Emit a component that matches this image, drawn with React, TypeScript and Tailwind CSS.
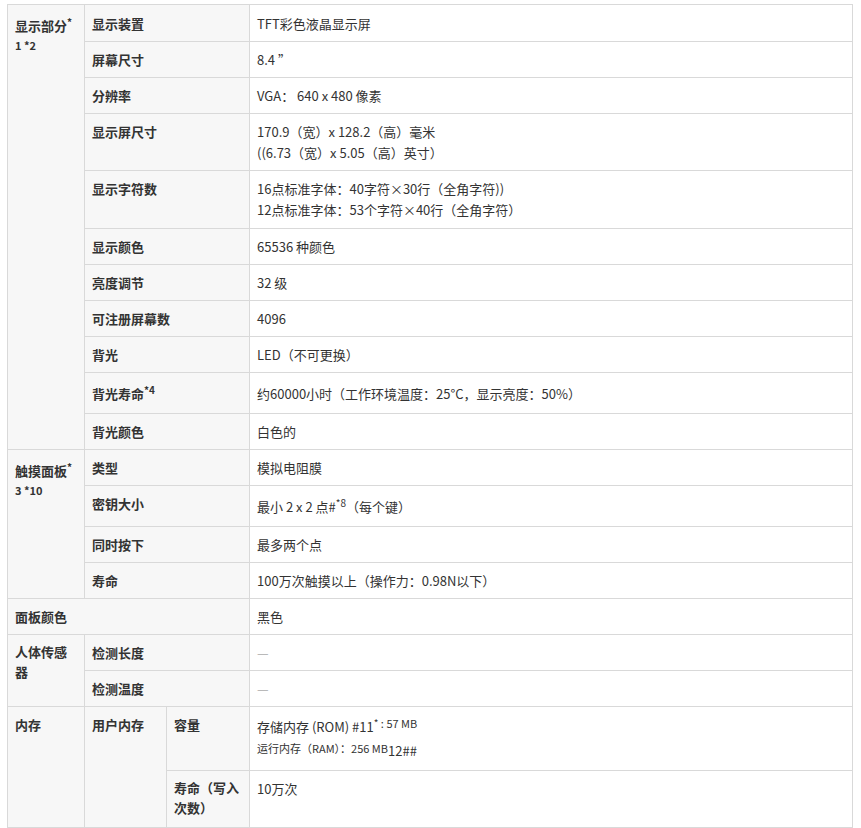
import React from "react";

const B = "border border-[#d9d9d9]";
const TH = `${B} bg-[#f7f7f7] px-[7px] py-[7px] text-left align-top font-bold`;
const TD = `${B} bg-white px-[7px] py-[7px] align-top font-normal`;

function Sup({ children, bold }: { children: React.ReactNode; bold?: boolean }) {
  return (
    <span className={`relative -top-[5px] text-[10px] leading-none ${bold ? "font-bold" : "font-normal"}`}>
      {children}
    </span>
  );
}

export default function App() {
  return (
    <div
      className="bg-white min-h-[828px] pl-[7px] pt-[4px] text-[#333] text-[13px] leading-[21px]"
      style={{ fontFamily: '"Noto Sans CJK SC", "Noto Sans", sans-serif' }}
    >
      <table className="table-fixed border-collapse w-[846px]">
        <colgroup>
          <col className="w-[77px]" />
          <col className="w-[82px]" />
          <col className="w-[83px]" />
          <col />
        </colgroup>
        <tbody>
          <tr>
            <th rowSpan={11} className={`${TH} !pt-[10px]`}>
              显示部分<Sup bold>*</Sup>
              <div className="text-[11px] leading-[19px]">1 *2</div>
            </th>
            <th colSpan={2} className={`${TH} !pt-[8px]`}>显示装置</th>
            <td className={`${TD} !pt-[8px]`}>TFT彩色液晶显示屏</td>
          </tr>
          <tr>
            <th colSpan={2} className={TH}>屏幕尺寸</th>
            <td className={TD}>8.4 ”</td>
          </tr>
          <tr>
            <th colSpan={2} className={TH}>分辨率</th>
            <td className={TD}>VGA： 640 x 480 像素</td>
          </tr>
          <tr>
            <th colSpan={2} className={TH}>显示屏尺寸</th>
            <td className={TD}>
              170.9（宽）x 128.2（高）毫米
              <br />
              ((6.73（宽）x 5.05（高）英寸）
            </td>
          </tr>
          <tr>
            <th colSpan={2} className={TH}>显示字符数</th>
            <td className={`${TD} !pb-[8px]`}>
              16点标准字体：40字符×30行（全角字符))
              <br />
              12点标准字体：53个字符×40行（全角字符）
            </td>
          </tr>
          <tr>
            <th colSpan={2} className={TH}>显示颜色</th>
            <td className={TD}>65536 种颜色</td>
          </tr>
          <tr>
            <th colSpan={2} className={TH}>亮度调节</th>
            <td className={TD}>32 级</td>
          </tr>
          <tr>
            <th colSpan={2} className={TH}>可注册屏幕数</th>
            <td className={TD}>4096</td>
          </tr>
          <tr>
            <th colSpan={2} className={TH}>背光</th>
            <td className={TD}>LED（不可更换）</td>
          </tr>
          <tr>
            <th colSpan={2} className={`${TH} !py-[9.5px]`}>
              背光寿命<Sup bold>*4</Sup>
            </th>
            <td className={`${TD} !py-[9.5px]`}>约60000小时（工作环境温度：25°C，显示亮度：50%）</td>
          </tr>
          <tr>
            <th colSpan={2} className={TH}>背光颜色</th>
            <td className={TD}>白色的</td>
          </tr>
          <tr>
            <th rowSpan={4} className={`${TH} !pt-[10px]`}>
              触摸面板<Sup bold>*</Sup>
              <div className="text-[11px] leading-[19px]">3 *10</div>
            </th>
            <th colSpan={2} className={TH}>类型</th>
            <td className={TD}>模拟电阻膜</td>
          </tr>
          <tr>
            <th colSpan={2} className={TH}>密钥大小</th>
            <td className={`${TD} !pt-[10px] !pb-[9px]`}>
              最小 2 x 2 点#<Sup>*8</Sup>（每个键）
            </td>
          </tr>
          <tr>
            <th colSpan={2} className={TH}>同时按下</th>
            <td className={TD}>最多两个点</td>
          </tr>
          <tr>
            <th colSpan={2} className={TH}>寿命</th>
            <td className={TD}>100万次触摸以上（操作力：0.98N以下）</td>
          </tr>
          <tr>
            <th colSpan={3} className={TH}>面板颜色</th>
            <td className={TD}>黑色</td>
          </tr>
          <tr>
            <th rowSpan={2} className={`${TH} leading-[20px]`}>人体传感器</th>
            <th colSpan={2} className={TH}>检测长度</th>
            <td className={`${TD} text-[#aaa]`}>—</td>
          </tr>
          <tr>
            <th colSpan={2} className={TH}>检测温度</th>
            <td className={`${TD} text-[#aaa]`}>—</td>
          </tr>
          <tr>
            <th rowSpan={2} className={TH}>内存</th>
            <th rowSpan={2} className={TH}>用户内存</th>
            <th className={TH}>容量</th>
            <td className={`${TD} !pt-[10px] !pb-[11px]`}>
              <div className="leading-[20px]">
                存储内存 (ROM) #11<Sup>*</Sup>
                <span className="relative -top-[4px] text-[11px]"> : 57 MB</span>
              </div>
              <div className="leading-[22px]">
                <span className="text-[11px]">运行内存（RAM）：256 MB</span>
                <span className="relative top-[3px]">12##</span>
              </div>
            </td>
          </tr>
          <tr>
            <th className={`${TH} leading-[20px] !pb-[9px]`}>寿命（写入次数）</th>
            <td className={TD}>10万次</td>
          </tr>
        </tbody>
      </table>
    </div>
  );
}
